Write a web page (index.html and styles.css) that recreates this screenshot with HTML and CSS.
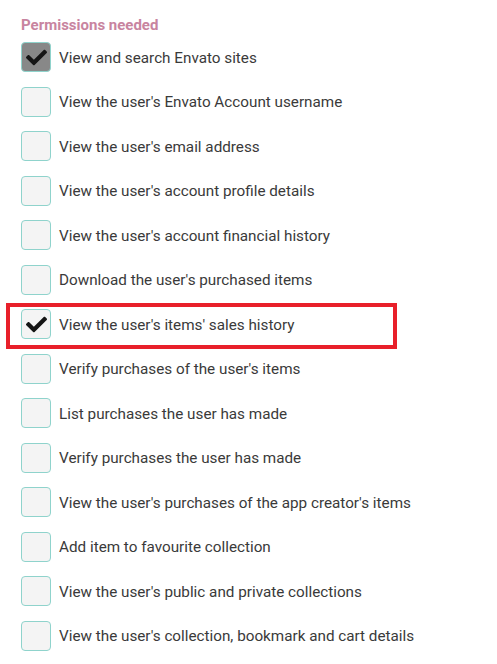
FILE: index.html
```html
<!DOCTYPE html>
<html>
<head>
<meta charset="utf-8">
<link rel="stylesheet" href="styles.css">
</head>
<body>
<div class="panel">
  <h3 class="title">Permissions needed</h3>
  <ul class="perms">
    <li class="perm"><span class="box checked-grey"><svg viewBox="0 0 512 512"><path d="M173.9 439.4L7.5 273c-10-10-10-26.2 0-36.2l36.2-36.2c10-10 26.2-10 36.2 0L192 312.7 432.1 72.6c10-10 26.2-10 36.2 0l36.2 36.2c10 10 10 26.2 0 36.2L210.1 439.4c-10 10-26.2 10-36.2 0z"/></svg></span><span class="label">View and search Envato sites</span></li>
    <li class="perm"><span class="box"></span><span class="label">View the user's Envato Account username</span></li>
    <li class="perm"><span class="box"></span><span class="label">View the user's email address</span></li>
    <li class="perm"><span class="box"></span><span class="label">View the user's account profile details</span></li>
    <li class="perm"><span class="box"></span><span class="label">View the user's account financial history</span></li>
    <li class="perm"><span class="box"></span><span class="label">Download the user's purchased items</span></li>
    <li class="perm highlight"><span class="box"><svg viewBox="0 0 512 512"><path d="M173.9 439.4L7.5 273c-10-10-10-26.2 0-36.2l36.2-36.2c10-10 26.2-10 36.2 0L192 312.7 432.1 72.6c10-10 26.2-10 36.2 0l36.2 36.2c10 10 10 26.2 0 36.2L210.1 439.4c-10 10-26.2 10-36.2 0z"/></svg></span><span class="label">View the user's items' sales history</span></li>
    <li class="perm"><span class="box"></span><span class="label">Verify purchases of the user's items</span></li>
    <li class="perm"><span class="box"></span><span class="label">List purchases the user has made</span></li>
    <li class="perm"><span class="box"></span><span class="label">Verify purchases the user has made</span></li>
    <li class="perm"><span class="box"></span><span class="label">View the user's purchases of the app creator's items</span></li>
    <li class="perm"><span class="box"></span><span class="label">Add item to favourite collection</span></li>
    <li class="perm"><span class="box"></span><span class="label">View the user's public and private collections</span></li>
    <li class="perm"><span class="box"></span><span class="label">View the user's collection, bookmark and cart details</span></li>
  </ul>
</div>
</body>
</html>
```
FILE: styles.css
```css
html, body {
  margin: 0;
  padding: 0;
  background: #ffffff;
}
body {
  font-family: Roboto, "Liberation Sans", sans-serif;
  color: #3a3a3a;
}
.panel {
  padding: 16px 0 0 21px;
}
.title {
  margin: 0 0 7px 0;
  font-size: 15px;
  font-weight: 700;
  color: #c8849f;
  line-height: 19px;
}
.perms {
  list-style: none;
  margin: 0;
  padding: 0;
  display: flex;
  flex-direction: column;
  gap: 14.5px;
}
.perm {
  display: flex;
  align-items: center;
  gap: 8px;
  height: 30px;
  position: relative;
}
.box {
  width: 30px;
  height: 30px;
  box-sizing: border-box;
  border: 1px solid #8fd3cc;
  border-radius: 4px;
  background: #f4f4f4;
  display: flex;
  align-items: center;
  justify-content: center;
  flex-shrink: 0;
}
.box svg {
  width: 21px;
  height: 21px;
  fill: #151515;
}
.box.checked-grey {
  background: #888888;
}
.label {
  font-size: 15.25px;
  line-height: 18px;
  padding-top: 1px;
}
.highlight::after {
  content: "";
  position: absolute;
  top: -6px;
  left: -15px;
  width: 391px;
  height: 46px;
  border: 4px solid #e8202a;
  box-sizing: border-box;
}
```
